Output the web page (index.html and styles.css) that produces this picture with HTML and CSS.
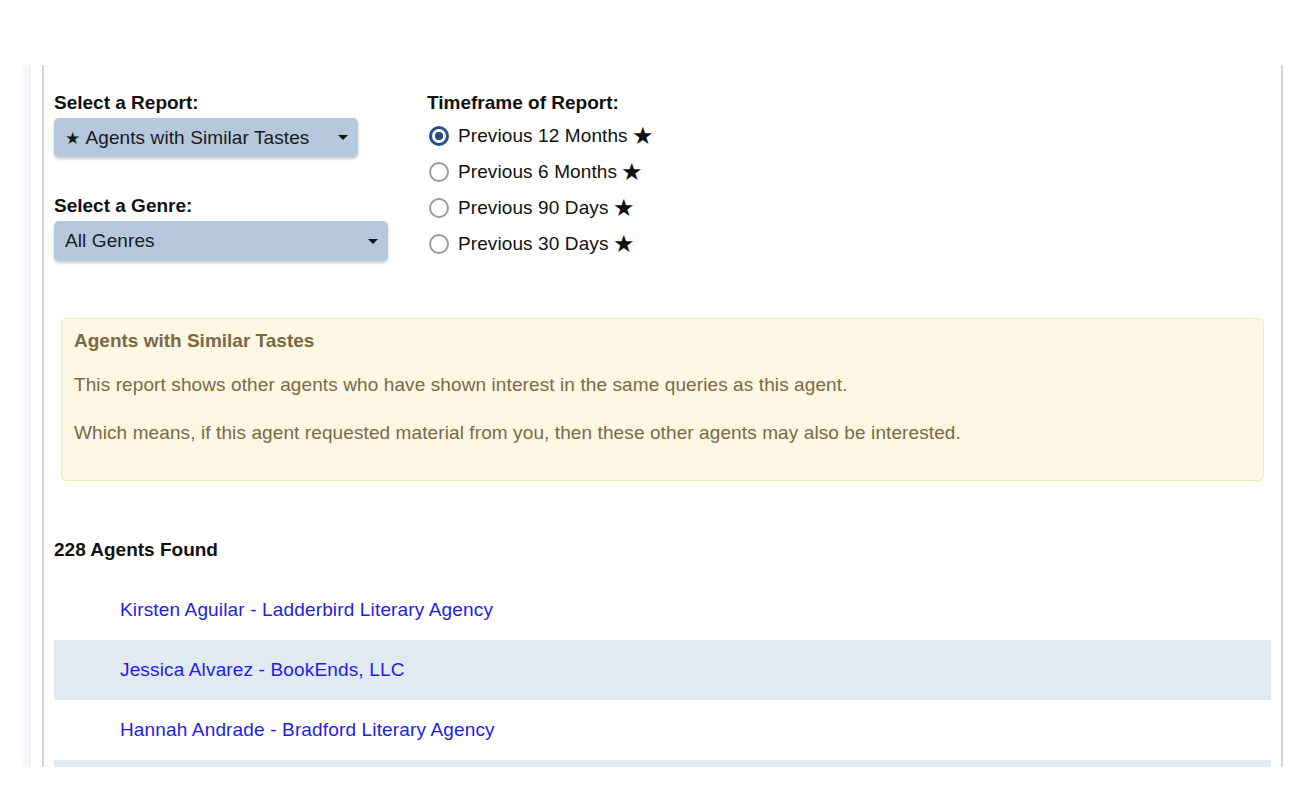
FILE: index.html
```html
<!DOCTYPE html>
<html lang="en">
  <head>
    <meta charset="UTF-8" />
    <meta name="viewport" content="width=device-width, initial-scale=1.0" />
    <title>Agents with Similar Tastes</title>
    <link rel="stylesheet" href="styles.css">
  </head>

  <body>
    <div class="frame">
      <div class="side-strip"></div>
      <main class="panel">
        <section class="filters">
          <div class="filter-col">
            <label class="field-label">Select a Report:</label>
            <div class="select-box select-report">
              <span><span class="small-star">★</span> Agents with Similar Tastes</span>
              <span class="caret"></span>
            </div>

            <label class="field-label genre-label">Select a Genre:</label>
            <div class="select-box select-genre">
              <span>All Genres</span>
              <span class="caret"></span>
            </div>
          </div>

          <div class="timeframe">
            <div class="field-label">Timeframe of Report:</div>
            <label class="radio-row">
              <input type="radio" name="timeframe" checked />
              <span>Previous 12 Months</span><span class="big-star">★</span>
            </label>
            <label class="radio-row">
              <input type="radio" name="timeframe" />
              <span>Previous 6 Months</span><span class="big-star">★</span>
            </label>
            <label class="radio-row">
              <input type="radio" name="timeframe" />
              <span>Previous 90 Days</span><span class="big-star">★</span>
            </label>
            <label class="radio-row">
              <input type="radio" name="timeframe" />
              <span>Previous 30 Days</span><span class="big-star">★</span>
            </label>
          </div>
        </section>

        <div class="report-info">
          <h4>Agents with Similar Tastes</h4>
          <p>This report shows other agents who have shown interest in the same queries as this agent.</p>
          <p>Which means, if this agent requested material from you, then these other agents may also be interested.</p>
        </div>

        <h3 class="found-count">228 Agents Found</h3>

        <ul class="agent-list">
          <li><a href="#">Kirsten Aguilar - Ladderbird Literary Agency</a></li>
          <li><a href="#">Jessica Alvarez - BookEnds, LLC</a></li>
          <li><a href="#">Hannah Andrade - Bradford Literary Agency</a></li>
          <li></li>
        </ul>
      </main>
    </div>
  </body>
</html>
```

FILE: styles.css
```css
body {
  margin: 0;
  padding: 0;
  background: #ffffff;
  color: #111111;
  font-family: "Liberation Sans", Arial, sans-serif;
  font-size: 19px;
  letter-spacing: 0.1px;
}

.frame {
  display: flex;
  margin-top: 65px;
  height: 702px;
  overflow: hidden;
}

.side-strip {
  margin-left: 21px;
  width: 8px;
  background: #f7f9fc;
  border-right: 2px solid #f0f2f6;
}

.panel {
  margin-left: 11px;
  width: 1217px;
  padding: 28px 10px 0 10px;
  border-left: 2px solid #c9d6e6;
  border-right: 2px solid #c9d6e6;
}

/* filtros */
.filters {
  display: flex;
}

.filter-col {
  width: 373px;
  display: flex;
  flex-direction: column;
  align-items: flex-start;
}

.field-label {
  display: block;
  font-weight: bold;
  line-height: 20px;
  margin-bottom: 5px;
  letter-spacing: 0;
}

.genre-label {
  margin-top: 39px;
}

.select-box {
  display: flex;
  align-items: center;
  justify-content: space-between;
  box-sizing: border-box;
  height: 39px;
  padding: 0 10px 0 11px;
  background: #b5c8dd;
  border-radius: 5px;
  box-shadow: 0 2px 3px rgba(0, 0, 0, 0.22);
  color: #1a1a1a;
}

.select-report {
  width: 304px;
}

.select-genre {
  width: 334px;
  height: 40px;
}

.small-star {
  font-size: 17px;
  margin-right: 1px;
}

.caret {
  width: 0;
  height: 0;
  border-left: 5px solid transparent;
  border-right: 5px solid transparent;
  border-top: 5px solid #111111;
}

/* timeframe */
.timeframe {
  display: flex;
  flex-direction: column;
}

.radio-row {
  display: flex;
  align-items: center;
  height: 36px;
  color: #111111;
}

.radio-row input {
  appearance: none;
  -webkit-appearance: none;
  box-sizing: border-box;
  width: 20px;
  height: 20px;
  margin: 0 9px 0 2px;
  border: 2.5px solid #9a99a8;
  border-radius: 50%;
  background: #ffffff;
}

.radio-row input:checked {
  border: 3px solid #2d4e8c;
  background: radial-gradient(circle, #2d4e8c 0 4px, #ffffff 4.5px);
}

.big-star {
  font-size: 24px;
  margin-left: 4px;
  line-height: 1;
}

/* caixa de informacao */
.report-info {
  margin: 56px 7px 0 7px;
  padding: 11px 12px 0 12px;
  background: #fcf7e3;
  border: 1px solid #f6e8b1;
  border-radius: 5px;
  color: #7b6945;
  height: 150px;
}

.report-info h4 {
  margin: 0;
  font-size: 19px;
  line-height: 22px;
  letter-spacing: 0;
}

.report-info p {
  margin: 22px 0 0 0;
  line-height: 22px;
}

.report-info p + p {
  margin-top: 26px;
}

.found-count {
  margin: 58px 0 0 0;
  font-size: 19px;
  line-height: 22px;
  letter-spacing: 0;
}

/* lista de agentes */
.agent-list {
  list-style: none;
  margin: 19px 0 0 0;
  padding: 0;
}

.agent-list li {
  display: flex;
  align-items: center;
  height: 60px;
  padding-left: 66px;
}

.agent-list li:nth-child(even) {
  background: #e3e9f1;
}

.agent-list a {
  color: #1c1cf2;
  text-decoration: none;
  letter-spacing: 0.15px;
}
```
